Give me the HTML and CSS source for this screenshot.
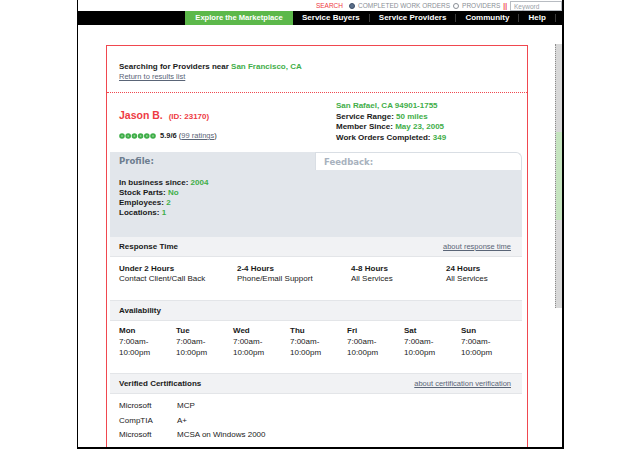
FILE: index.html
```html
<!DOCTYPE html>
<html>
<head>
  <title>Provider Profile - Jason B.</title>
  <link rel="stylesheet" href="styles.css">
</head>
<body>

  <div class="page">

    <!-- search strip above the nav -->
    <div class="searchbar">
      <span class="search-label">SEARCH</span>
      <span class="radio checked"></span>
      <span class="search-opt">COMPLETED WORK ORDERS</span>
      <span class="radio"></span>
      <span class="search-opt">PROVIDERS</span>
      <span class="search-sep">||</span>
      <span class="keyword">Keyword</span>
    </div>

    <div class="nav">
      <a class="nav-item active">Explore the Marketplace</a>
      <a class="nav-item">Service Buyers</a>
      <a class="nav-item">Service Providers</a>
      <a class="nav-item">Community</a>
      <a class="nav-item">Help</a>
    </div>

    <div class="content">

      <div class="listing">

        <div class="search-head">
          <p>Searching for Providers near <span class="green">San Francisco, CA</span></p>
          <a class="link">Return to results list</a>
        </div>

        <div class="provider">
          <div class="provider-left">
            <h1>Jason B. <small>(ID: 23170)</small></h1>
            <div class="rating">
              <svg width="37" height="6" viewBox="0 0 37 6">
                <g fill="#3fae49">
                  <circle cx="3" cy="3" r="2.8"/><circle cx="9.2" cy="3" r="2.8"/>
                  <circle cx="15.4" cy="3" r="2.8"/><circle cx="21.6" cy="3" r="2.8"/>
                  <circle cx="27.8" cy="3" r="2.8"/><circle cx="34" cy="3" r="2.8"/>
                </g>
                <g fill="#8fd18f">
                  <circle cx="3" cy="3" r="0.9"/><circle cx="9.2" cy="3" r="0.9"/>
                  <circle cx="15.4" cy="3" r="0.9"/><circle cx="21.6" cy="3" r="0.9"/>
                  <circle cx="27.8" cy="3" r="0.9"/><circle cx="34" cy="3" r="0.9"/>
                </g>
              </svg>
              <span><b>5.9/6</b> (<a class="link">99 ratings</a>)</span>
            </div>
          </div>
          <div class="provider-right">
            <p class="green">San Rafael, CA 94901-1755</p>
            <p>Service Range: <span class="green">50 miles</span></p>
            <p>Member Since: <span class="green">May 23, 2005</span></p>
            <p>Work Orders Completed: <span class="green">349</span></p>
          </div>
        </div>

        <div class="tabs">
          <div class="tab-row">
            <div class="tab current">Profile:</div>
            <div class="tab">Feedback:</div>
          </div>
          <div class="tab-body">
            <p>In business since: <span class="green">2004</span></p>
            <p>Stock Parts: <span class="green">No</span></p>
            <p>Employees: <span class="green">2</span></p>
            <p>Locations: <span class="green">1</span></p>
          </div>

          <div class="sec-head">
            <span>Response Time</span>
            <a class="link">about response time</a>
          </div>
          <div class="sec-body response">
            <div><b>Under 2 Hours</b><br>Contact Client/Call Back</div>
            <div><b>2-4 Hours</b><br>Phone/Email Support</div>
            <div><b>4-8 Hours</b><br>All Services</div>
            <div><b>24 Hours</b><br>All Services</div>
          </div>

          <div class="sec-head">
            <span>Availability</span>
          </div>
          <div class="sec-body days">
            <div><b>Mon</b><br>7:00am-<br>10:00pm</div>
            <div><b>Tue</b><br>7:00am-<br>10:00pm</div>
            <div><b>Wed</b><br>7:00am-<br>10:00pm</div>
            <div><b>Thu</b><br>7:00am-<br>10:00pm</div>
            <div><b>Fri</b><br>7:00am-<br>10:00pm</div>
            <div><b>Sat</b><br>7:00am-<br>10:00pm</div>
            <div><b>Sun</b><br>7:00am-<br>10:00pm</div>
          </div>

          <div class="sec-head">
            <span>Verified Certifications</span>
            <a class="link">about certification verification</a>
          </div>
          <div class="sec-body certs">
            <span>Microsoft</span><span>MCP</span>
            <span>CompTIA</span><span>A+</span>
            <span>Microsoft</span><span>MCSA on Windows 2000</span>
            <span>Dell</span><span>Foundation 2006 Desktops</span>
          </div>
        </div>

      </div>

      <div class="scroller"><div class="thumb"></div></div>

    </div>
  </div>

</body>
</html>
```

FILE: styles.css
```css
*{
  padding: 0;
  margin: 0;
  box-sizing: border-box;
}

body{
  background-color: #fff;
  font-family: "Liberation Sans", Arial, sans-serif;
  font-size: 8px;
  line-height: 10px;
  color: #1a1a1a;
}

b{
  font-weight: bold;
}

.green{
  color: #3fae49;
}

.link{
  color: #5a6577;
  text-decoration: underline;
  font-weight: normal;
  cursor: pointer;
}

.page{
  margin-left: 77px;
  width: 487px;
  height: 449px;
  border-left: 1px solid #000;
  border-right: 2px solid #000;
  border-bottom: 2px solid #000;
  overflow: hidden;
}

/* top strip */
.searchbar{
  height: 11px;
  display: flex;
  align-items: center;
  justify-content: flex-end;
  font-size: 6.5px;
  color: #8a8f96;
  gap: 3px;
}
.search-label{
  color: #ee3a43;
  margin-right: 3px;
}
.radio{
  width: 6px;
  height: 6px;
  border: 1px solid #8a8f96;
  border-radius: 50%;
}
.radio.checked{
  background-color: #5b6f8a;
  border-color: #3d4e66;
}
.search-sep{
  color: #ee3a43;
  font-weight: bold;
}
.keyword{
  width: 52px;
  height: 10px;
  line-height: 9px;
  border: 1px solid #b8bcc2;
  padding-left: 3px;
  color: #9aa0a8;
}

/* nav */
.nav{
  height: 14px;
  background-color: #000;
  display: flex;
  align-items: center;
  padding-left: 107px;
}
.nav-item{
  color: #fff;
  font-weight: bold;
  font-size: 8px;
  line-height: 8px;
  padding: 0 9px;
  border-right: 1px solid #3a3a3a;
  white-space: nowrap;
}
.nav-item.active{
  background-color: #5cb84a;
  line-height: 14px;
  width: 108px;
  padding: 0;
  font-size: 7.6px;
  text-align: center;
  border-right: none;
}

/* main content */
.content{
  display: flex;
  padding: 20px 0 0 28px;
}

.listing{
  width: 422px;
  height: 420px;
  border: 1px solid #f0484f;
  border-bottom: none;
}

.search-head{
  padding: 16px 12px 10px;
  border-bottom: 1px dotted #f0484f;
  font-weight: bold;
}
.search-head .link{
  display: block;
  font-size: 7.5px;
}

.provider{
  display: flex;
  height: 59px;
  padding-left: 12px;
}
.provider-left{
  width: 217px;
  padding-top: 16px;
}
.provider-left h1{
  color: #ee3a43;
  font-size: 10.5px;
  line-height: 12px;
  margin-bottom: 8px;
}
.provider-left small{
  font-size: 8px;
  margin-left: 3px;
}
.rating{
  display: flex;
  align-items: center;
  gap: 3px;
  font-size: 7.5px;
}
.rating svg{
  margin-right: 1px;
}
.provider-right{
  padding-top: 8px;
  font-weight: bold;
  line-height: 10.7px;
}

.tabs{
  margin: 0 5px 0 3px;
}
.tab-row{
  display: flex;
  height: 18px;
}
.tab{
  flex: 1;
  font-family: "DejaVu Sans", sans-serif;
  font-stretch: condensed;
  font-weight: bold;
  font-size: 9.5px;
  line-height: 18px;
  padding-left: 8px;
  color: #a8b2be;
  border: 1px solid #d9dee4;
  border-bottom: none;
  border-radius: 0 6px 0 0;
  background-color: #fff;
}
.tab.current{
  flex: 0 0 205px;
  background-color: #e2e6eb;
  color: #6d7d8f;
  border: none;
  border-radius: 0;
  padding-left: 9px;
}
.tab-body{
  height: 67px;
  background-color: #e2e6eb;
  padding: 8px 9px;
  font-weight: bold;
}

.sec-head{
  height: 20px;
  display: flex;
  align-items: center;
  justify-content: space-between;
  padding: 0 11px 0 9px;
  background-color: #f1f2f4;
  border-bottom: 1px solid #e3e5e8;
  font-weight: bold;
}
.sec-head .link{
  font-size: 7.5px;
}
.sec-body{
  border-bottom: 1px solid #e3e5e8;
  padding-left: 9px;
}

.response{
  height: 44px;
  padding-top: 7px;
  display: grid;
  grid-template-columns: 118px 114px 95px 1fr;
}

.days{
  height: 53px;
  padding-top: 4px;
  line-height: 11px;
  display: grid;
  grid-template-columns: repeat(7, 57px);
}

.certs{
  padding-top: 5px;
  display: grid;
  grid-template-columns: 58px 1fr;
  line-height: 14.5px;
}

/* scrollbar at the right */
.scroller{
  width: 7px;
  height: 264px;
  margin: -1px 0 0 27px;
  background-color: #d8d8d8;
  border-left: 1px dotted #8c8c8c;
  padding-top: 88px;
}
.thumb{
  height: 88px;
  background-color: #c5e4bf;
}
```
